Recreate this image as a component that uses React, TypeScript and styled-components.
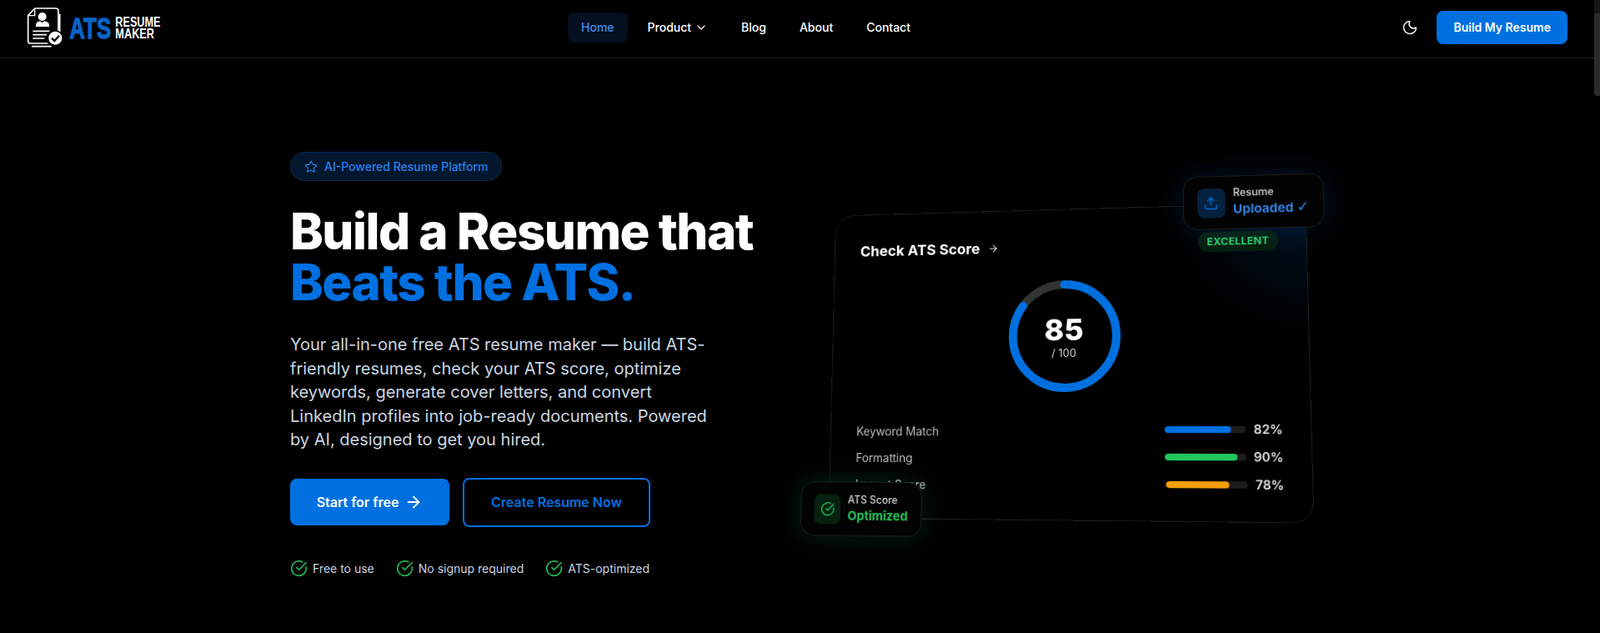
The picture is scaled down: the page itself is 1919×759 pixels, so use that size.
import styled, { createGlobalStyle } from 'styled-components';
import { ArrowRight, ChevronDown, CircleCheckBig, Moon, Star, Upload } from 'lucide-react';

const GlobalStyle = createGlobalStyle`
  * { box-sizing: border-box; }
  html, body { margin: 0; padding: 0; height: 100%; background: #000; overflow: hidden; }
  body { font-family: Inter, 'Liberation Sans', sans-serif; color: #fff; }
`;

const Page = styled.div`
  width: 1912px;
  height: 759px;
  background: #000;
`;

const ScrollThumb = styled.div`
  position: fixed;
  top: 16px;
  right: 0;
  width: 7px;
  height: 99px;
  background: #2b2b2b;
  border-radius: 0 0 0 3px;

  &::before {
    content: '';
    position: absolute;
    top: -16px;
    left: 0;
    width: 100%;
    height: 16px;
    background: #161616;
  }
`;

const Header = styled.header`
  height: 70px;
  padding: 0 32px 4px;
  display: flex;
  align-items: center;
  border-bottom: 1px solid #1c1c1c;
`;

const LogoMark = styled.svg`
  width: 178px;
  height: 69px;
  flex: none;
  margin-bottom: -3px;
`;

const LogoText = styled.text`
  font-family: 'Liberation Sans', sans-serif;
  font-weight: 700;
`;

const Nav = styled.nav`
  margin-left: 471px;
  display: flex;
  align-items: center;
  gap: 8px;
`;

const NavLink = styled.a<{ $active?: boolean }>`
  height: 36px;
  padding: 0 16px;
  display: flex;
  align-items: center;
  gap: 4px;
  border-radius: 8px;
  font-size: 14px;
  font-weight: 500;
  color: ${p => (p.$active ? '#3f8ee8' : '#fff')};
  background: ${p => (p.$active ? '#040f20' : 'transparent')};
`;

const HeaderRight = styled.div`
  margin-left: auto;
  display: flex;
  align-items: center;
  gap: 14px;
`;

const ThemeToggle = styled.button`
  width: 36px;
  height: 36px;
  padding: 0;
  display: flex;
  align-items: center;
  justify-content: center;
  background: none;
  border: 0;
  color: #fff;
`;

const HeaderButton = styled.button`
  height: 40px;
  padding: 0 20px;
  border: 0;
  border-radius: 8px;
  background: #0070e0;
  color: #fff;
  font: 600 14px Inter, sans-serif;
`;

const Hero = styled.main`
  width: 1216px;
  margin: 0 auto;
  padding-top: 112px;
  display: grid;
  grid-template-columns: 576px 576px;
  gap: 64px;
  align-items: start;
`;

const Copy = styled.div`
  display: flex;
  flex-direction: column;
  align-items: flex-start;
`;

const Pill = styled.div`
  height: 35px;
  padding: 0 16px;
  display: flex;
  align-items: center;
  gap: 8px;
  border-radius: 18px;
  background: #03172e;
  border: 1px solid #07294f;
  color: #2a80ea;
  font-size: 14px;
  font-weight: 500;
`;

const Title = styled.h1`
  margin: 30px 0 0;
  font-size: 60px;
  line-height: 61px;
  font-weight: 800;
  letter-spacing: -1.5px;
  color: #fff;
`;

const TitleAccent = styled.span`
  display: block;
  color: #0070e0;
`;

const Lead = styled.p`
  margin: 30px 0 0;
  width: 512px;
  font-size: 20px;
  line-height: 28.6px;
  color: #cbd5e1;
`;

const Actions = styled.div`
  margin-top: 31px;
  display: flex;
  align-items: center;
  gap: 16px;
`;

const PrimaryAction = styled.button`
  width: 191px;
  height: 56px;
  display: flex;
  align-items: center;
  justify-content: center;
  gap: 7px;
  border: 0;
  border-radius: 8px;
  background: #0070e0;
  color: #fff;
  font: 600 16px Inter, sans-serif;
`;

const SecondaryAction = styled.button`
  width: 225px;
  height: 59px;
  border: 2px solid #0070e0;
  border-radius: 8px;
  background: transparent;
  color: #0070e0;
  font: 600 16px Inter, sans-serif;
`;

const Perks = styled.ul`
  list-style: none;
  margin: 39px 0 0;
  padding: 0;
  display: flex;
  gap: 26px;
`;

const Perk = styled.li`
  display: flex;
  align-items: center;
  gap: 6px;
  font-size: 14px;
  color: #cbd5e1;
  svg { color: #22c55e; }
`;

const CardStage = styled.div`
  position: relative;
  margin-top: 65px;
  transform: perspective(1000px) rotateX(5deg) rotateY(-6deg);
`;

const Card = styled.section`
  position: relative;
  height: 375px;
  padding: 32px;
  overflow: hidden;
  border: 1px solid #1c1c1c;
  border-radius: 24px;
  background: #000;
`;

const CardGlow = styled.div`
  position: absolute;
  top: -160px;
  right: -160px;
  width: 320px;
  height: 320px;
  background: radial-gradient(circle, rgba(0, 112, 224, 0.17), transparent 68%);
`;

const CardHead = styled.div`
  position: relative;
  display: flex;
  align-items: center;
  justify-content: space-between;
`;

const CardTitle = styled.div`
  display: flex;
  align-items: center;
  gap: 10px;
  font-size: 18px;
  line-height: 28px;
  font-weight: 700;
`;

const Grade = styled.span`
  margin-top: -4px;
  padding: 4px 11px;
  border-radius: 12px;
  background: #07200f;
  color: #2dd36f;
  font-size: 12px;
  line-height: 16px;
  font-weight: 700;
  letter-spacing: 0.3px;
`;

const Gauge = styled.div`
  position: relative;
  width: 135px;
  height: 135px;
  margin: 27px auto 36px;
`;

const GaugeText = styled.div`
  position: absolute;
  inset: 0;
  display: flex;
  flex-direction: column;
  align-items: center;
  justify-content: center;
`;

const GaugeValue = styled.div`
  font-size: 36px;
  line-height: 40px;
  font-weight: 800;
`;

const GaugeMax = styled.div`
  font-size: 13px;
  line-height: 16px;
  color: #d0d0d0;
`;

const Metrics = styled.div`
  display: flex;
  flex-direction: column;
  gap: 12px;
`;

const Metric = styled.div`
  height: 20px;
  display: flex;
  align-items: center;
  justify-content: space-between;
`;

const MetricLabel = styled.span`
  font-size: 14px;
  color: #bdbdbd;
`;

const MetricValue = styled.div`
  margin-top: -3px;
  display: flex;
  align-items: center;
  gap: 9px;
  font-size: 14.5px;
  font-weight: 600;
  color: #e5e5e5;
`;

const Track = styled.div`
  width: 94px;
  height: 8px;
  border-radius: 4px;
  background: #1c1c1c;
  overflow: hidden;
`;

const Fill = styled.div<{ $color: string }>`
  height: 100%;
  border-radius: 4px;
  background: ${p => p.$color};
`;

const Float = styled.div<{ $glow: string }>`
  position: absolute;
  display: flex;
  align-items: center;
  gap: 9px;
  height: 65px;
  padding: 0 16px;
  border: 1px solid #1c1c1c;
  border-radius: 16px;
  background: #030303;
  box-shadow: 0 0 32px ${p => p.$glow};
`;

const UploadFloat = styled(Float)`
  top: -35px;
  right: -21px;
`;

const ScoreFloat = styled(Float)`
  bottom: -21px;
  left: -35px;
`;

const FloatIcon = styled.div<{ $bg: string; $color: string }>`
  width: 33px;
  height: 36px;
  display: flex;
  align-items: center;
  justify-content: center;
  border-radius: 8px;
  background: ${p => p.$bg};
  color: ${p => p.$color};
`;

const FloatLabel = styled.div`
  font-size: 12.5px;
  line-height: 16px;
  font-weight: 500;
  color: #d4d4d4;
`;

const FloatValue = styled.div<{ $color: string }>`
  font-size: 15px;
  line-height: 22px;
  font-weight: 700;
  color: ${p => p.$color};
`;

const Tick = styled.span`
  font-family: 'DejaVu Sans', sans-serif;
  font-size: 18px;
  font-weight: 400;
`;

const metrics = [
  { label: 'Keyword Match', value: 82, color: '#0070e0' },
  { label: 'Formatting', value: 90, color: '#22c55e' },
  { label: 'Impact Score', value: 78, color: '#f59e0b' },
];

const perks = ['Free to use', 'No signup required', 'ATS-optimized'];

const ringLength = 2 * Math.PI * 62.5;

export default function App() {
  return (
    <Page>
      <GlobalStyle />
      <ScrollThumb />
      <Header>
        {/* logo drawn on the 3x crop grid */}
        <LogoMark viewBox="36 0 534 207">
          <path d="M65 30 H140 Q150 30 150 40 V143" fill="none" stroke="#fff" strokeWidth="5" />
          <path d="M65 30 L41 56 V148 Q41 156 49 156 H112" fill="none" stroke="#fff" strokeWidth="5" />
          <path d="M65 30 V56 H41" fill="none" stroke="#fff" strokeWidth="4" />
          <path d="M155 50 V120 M54 167 H125" fill="none" stroke="#fff" strokeWidth="5" />
          <circle cx="92" cy="60" r="15" fill="#fff" />
          <path d="M68 96 Q68 78 84 76 L92 82 L100 76 Q118 78 118 96 Z" fill="#fff" />
          <path d="M58 112 H118 M58 125 H108 M58 138 H100" stroke="#fff" strokeWidth="5" />
          <circle cx="139" cy="137" r="29" fill="#000" />
          <circle cx="139" cy="137" r="24" fill="#fff" />
          <path d="M126 137 L136 147 L153 128" fill="none" stroke="#000" strokeWidth="7" />
          <LogoText transform="translate(190 138) scale(0.72 1)" fontSize="108" fill="#0a64c8" stroke="#0a64c8" strokeWidth="4">ATS</LogoText>
          <LogoText transform="translate(355 95) scale(0.76 1)" fontSize="50" fill="#fff">RESUME</LogoText>
          <LogoText transform="translate(355 139) scale(0.765 1)" fontSize="50" fill="#fff">MAKER</LogoText>
        </LogoMark>
        <Nav>
          <NavLink $active>Home</NavLink>
          <NavLink>
            Product <ChevronDown size={16} strokeWidth={1.75} />
          </NavLink>
          <NavLink>Blog</NavLink>
          <NavLink>About</NavLink>
          <NavLink>Contact</NavLink>
        </Nav>
        <HeaderRight>
          <ThemeToggle>
            <Moon size={20} strokeWidth={1.75} />
          </ThemeToggle>
          <HeaderButton>Build My Resume</HeaderButton>
        </HeaderRight>
      </Header>

      <Hero>
        <Copy>
          <Pill>
            <Star size={16} strokeWidth={1.75} />
            AI-Powered Resume Platform
          </Pill>
          <Title>
            Build a Resume that
            <TitleAccent>Beats the ATS.</TitleAccent>
          </Title>
          <Lead>
            Your all-in-one free ATS resume maker — build ATS-friendly resumes, check your ATS
            score, optimize keywords, generate cover letters, and convert LinkedIn profiles into
            job-ready documents. Powered by AI, designed to get you hired.
          </Lead>
          <Actions>
            <PrimaryAction>
              Start for free <ArrowRight size={22} strokeWidth={2} />
            </PrimaryAction>
            <SecondaryAction>Create Resume Now</SecondaryAction>
          </Actions>
          <Perks>
            {perks.map(perk => (
              <Perk key={perk}>
                <CircleCheckBig size={21} strokeWidth={1.75} />
                {perk}
              </Perk>
            ))}
          </Perks>
        </Copy>

        <CardStage>
          <Card>
            <CardGlow />
            <CardHead>
              <CardTitle>
                Check ATS Score <ArrowRight size={14} strokeWidth={1.75} />
              </CardTitle>
              <Grade>EXCELLENT</Grade>
            </CardHead>
            <Gauge>
              <svg width="135" height="135" viewBox="0 0 135 135">
                <circle cx="67.5" cy="67.5" r="62.5" fill="none" stroke="#333" strokeWidth="10" />
                <circle
                  cx="67.5"
                  cy="67.5"
                  r="62.5"
                  fill="none"
                  stroke="#0070e0"
                  strokeWidth="10"
                  strokeLinecap="round"
                  strokeDasharray={`${ringLength * 0.85} ${ringLength}`}
                  transform="rotate(-90 67.5 67.5)"
                />
              </svg>
              <GaugeText>
                <GaugeValue>85</GaugeValue>
                <GaugeMax>/ 100</GaugeMax>
              </GaugeText>
            </Gauge>
            <Metrics>
              {metrics.map(m => (
                <Metric key={m.label}>
                  <MetricLabel>{m.label}</MetricLabel>
                  <MetricValue>
                    <Track>
                      <Fill $color={m.color} style={{ width: `${m.value}%` }} />
                    </Track>
                    {m.value}%
                  </MetricValue>
                </Metric>
              ))}
            </Metrics>
          </Card>

          <UploadFloat $glow="rgba(0, 112, 224, 0.18)">
            <FloatIcon $bg="#04213f" $color="#0070e0">
              <Upload size={18} strokeWidth={1.75} />
            </FloatIcon>
            <div>
              <FloatLabel>Resume</FloatLabel>
              <FloatValue $color="#2f80e0">
                Uploaded <Tick>✓</Tick>
              </FloatValue>
            </div>
          </UploadFloat>

          <ScoreFloat $glow="rgba(34, 197, 94, 0.18)">
            <FloatIcon $bg="#07200f" $color="#22c55e">
              <CircleCheckBig size={18} strokeWidth={1.75} />
            </FloatIcon>
            <div>
              <FloatLabel>ATS Score</FloatLabel>
              <FloatValue $color="#22c55e">Optimized</FloatValue>
            </div>
          </ScoreFloat>
        </CardStage>
      </Hero>
    </Page>
  );
}
